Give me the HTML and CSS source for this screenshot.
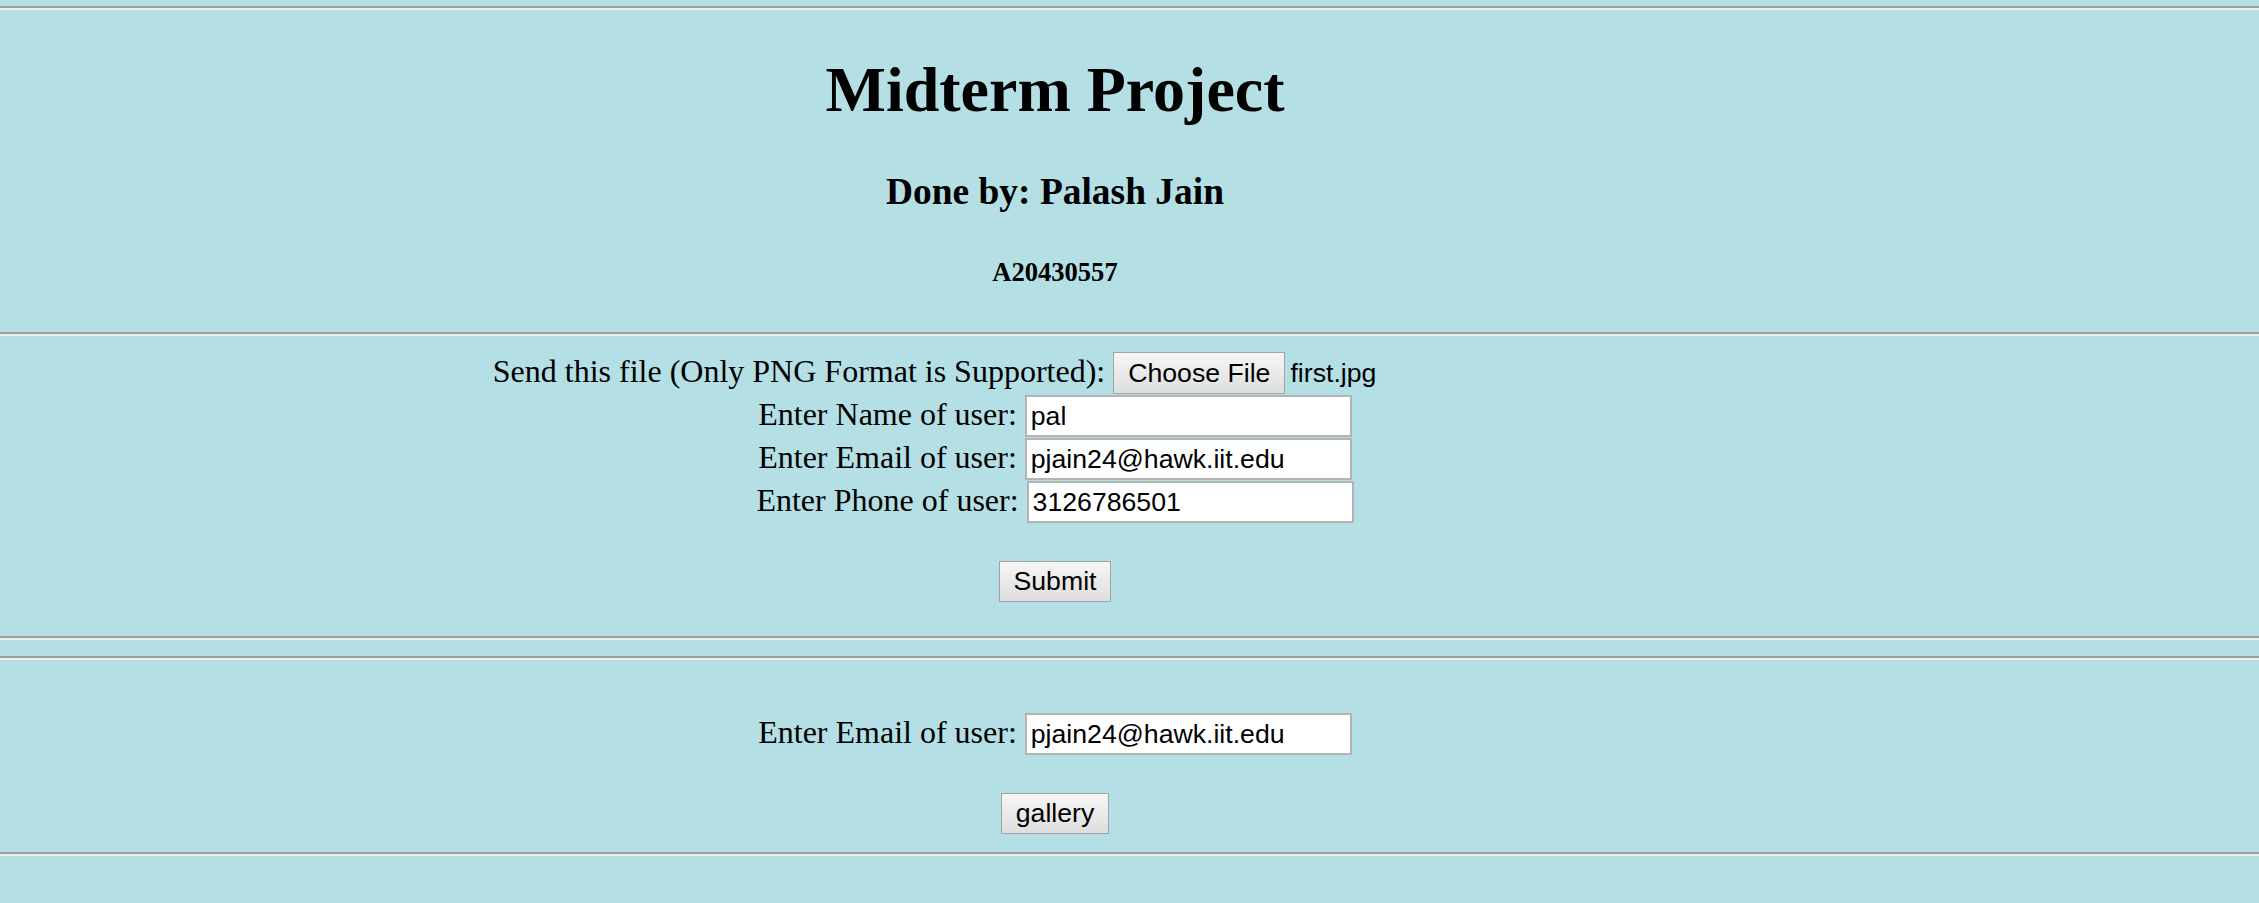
FILE: index.html
```html
<!DOCTYPE html>
<html lang="en">
<head>
<meta charset="utf-8">
<title>Midterm Project</title>
<link rel="stylesheet" href="styles.css">
</head>
<body>
<hr class="rule rule-first">
<header class="content heading">
  <h1 class="title">Midterm Project</h1>
  <h3 class="author">Done by: Palash Jain</h3>
  <h5 class="student-id">A20430557</h5>
</header>
<hr class="rule">
<form class="content upload-form">
  <div class="row">Send this file (Only PNG Format is Supported): <span class="file-input"><button type="button" class="btn btn-file">Choose File</button><span class="file-name">first.jpg</span></span></div>
  <div class="row">Enter Name of user: <input class="field" type="text" value="pal"></div>
  <div class="row">Enter Email of user: <input class="field" type="text" value="pjain24@hawk.iit.edu"></div>
  <div class="row">Enter Phone of user: <input class="field" type="text" value="3126786501"></div>
  <div class="row actions"><button type="button" class="btn">Submit</button></div>
</form>
<hr class="rule">
<hr class="rule">
<form class="content gallery-form">
  <div class="row">Enter Email of user: <input class="field" type="text" value="pjain24@hawk.iit.edu"></div>
  <div class="row actions"><button type="button" class="btn">gallery</button></div>
</form>
<hr class="rule">
</body>
</html>
```

FILE: styles.css
```css
html {
  background: #b4dfe5;
}

body {
  margin: 0;
  background: #b4dfe5;
  color: #000;
  font-family: "Liberation Serif", "Times New Roman", serif;
  font-size: 32px;
}

.rule {
  display: block;
  height: 0;
  margin: 16px 0;
  border: none;
  border-top: 2px solid #9a9e9f;
  border-bottom: 2px solid #eaeeee;
}

.rule-first {
  margin-top: 6px;
}

.content {
  width: 2110px;
  text-align: center;
}

.title {
  font-size: 64px;
  font-weight: bold;
  margin: 42.88px 0;
}

.author {
  font-size: 37.44px;
  font-weight: bold;
  margin: 37.44px 0;
}

.student-id {
  font-size: 26.56px;
  font-weight: bold;
  margin: 44.35px 0;
}

.upload-form {
  margin: 0 0 32px;
}

.gallery-form {
  margin: 0;
  padding-top: 37px;
}

.row {
  height: 43px;
  line-height: 36.8px;
  white-space: nowrap;
}

.actions {
  margin-top: 37px;
}

.field {
  box-sizing: border-box;
  width: 327px;
  height: 42px;
  margin: 0;
  padding: 0 4px;
  border: 2px solid #b3b3b3;
  background: #fff;
  color: #000;
  font-family: "Liberation Sans", Arial, sans-serif;
  font-size: 26.67px;
  vertical-align: baseline;
}

.btn {
  box-sizing: border-box;
  height: 41px;
  margin: 0;
  padding: 0 14px;
  border: 1px solid #a3a3a3;
  border-radius: 0;
  background: linear-gradient(#f6f6f6, #dedede);
  color: #000;
  font-family: "Liberation Sans", Arial, sans-serif;
  font-size: 26.67px;
  vertical-align: baseline;
}

.file-input {
  display: inline-block;
  width: 504px;
  text-align: left;
}

.btn-file {
  height: 42px;
  margin-right: 5px;
}

.file-name {
  font-family: "Liberation Sans", Arial, sans-serif;
  font-size: 26.67px;
}
```
